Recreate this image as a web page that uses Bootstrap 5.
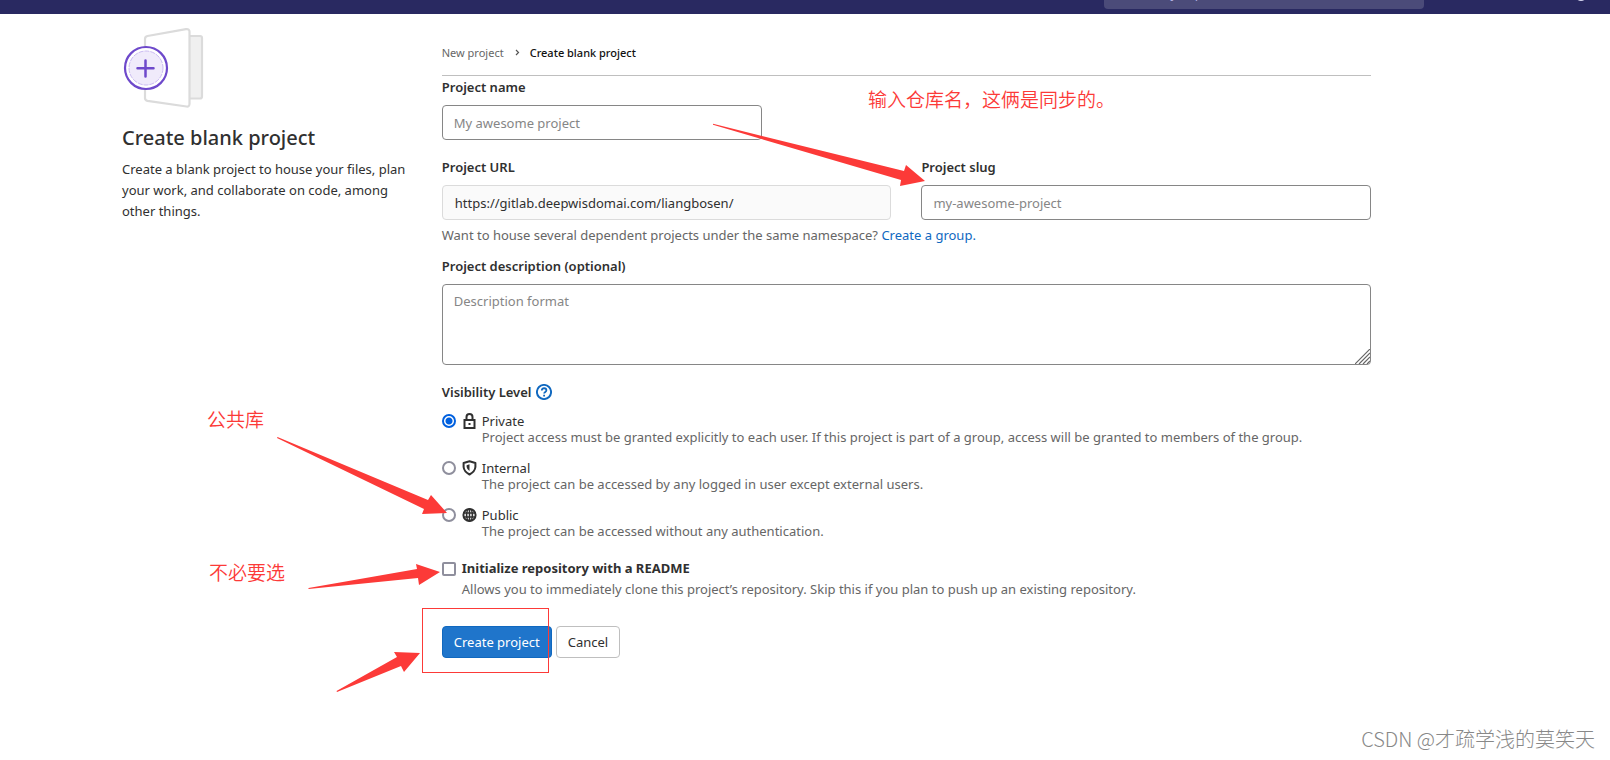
<!DOCTYPE html>
<html lang="en">
<head>
<meta charset="utf-8">
<meta name="viewport" content="width=device-width, initial-scale=1">
<title>Create blank project</title>
<link href="https://cdn.jsdelivr.net/npm/bootstrap@5.3.0/dist/css/bootstrap.min.css" rel="stylesheet">
<style>
body { font-family: "Noto Sans", "Noto Sans CJK SC", sans-serif; font-size: 13px; line-height: 20px; color: #303030; background: #fff; min-height: 100vh; }
.topbar { height: 14px; background: #292961; padding-right: 186px; padding-bottom: 5px; }
.topbar input { width: 320px; height: 32px; border: 0; border-radius: 4px; background: #4b4b79; color: #c0c0e8; padding: 0 6px; font-size: 13px; }
.topbar input::placeholder { color: #b0b0e0; opacity: 1; }
.topbar-icon { right: 23px; bottom: 13px; width: 12px; height: 12px; border-radius: 50%; background: #d8d8f0; }
.page { width: auto; margin-left: 107px; margin-right: 224px; padding: 0 15px; }
.page .row { --bs-gutter-x: 30px; }
.page-title { font-size: 20px; line-height: 26px; font-weight: 500; margin: 17px 0 8px; }
.side-text { line-height: 21px; }
.crumbs { font-size: 11px; line-height: 18px; padding: 30px 0 13px; border-bottom: 1px solid #bfbfbf; margin-bottom: 1px; }
.crumbs a { color: #666; text-decoration: none; }
.crumbs svg { margin: 0 9px; }
.crumbs .current { color: #111; font-weight: 500; }
.block-gap { margin-top: 17px; }
.field-label { display: block; font-size: 13px; font-weight: 600; line-height: 20px; margin: 0 0 8px; }
.field-box { display: block; width: 100%; height: 35px; border: 1px solid #868686; border-radius: 4px; padding: 0 11px; font-size: 13px; background: #fff; color: #303030; }
.field-box::placeholder { color: #868686; opacity: 1; }
.field-box[readonly] { background: #fafafa; border-color: #dbdbdb; padding: 0 12px; }
.name-box { max-width: 320px; }
.help-line { margin: 5px 0 11px; }
textarea.field-box { height: 81px; padding-top: 6px; resize: none; }
.grip { right: 1px; bottom: 1px; }
.muted { color: #666; }
.lnk { color: #1068bf; text-decoration: none; }
.pick { appearance: none; width: 14px; height: 14px; margin: 0; border: 2px solid #8f8f9d; background: #fff; flex: none; }
.pick[type=radio] { border-radius: 50%; }
.pick[type=checkbox] { border-radius: 2px; }
.pick[type=radio]:checked { border-color: #0060df; background: radial-gradient(circle, #0060df 3px, #fff 4px); }
.levels .field-label { margin-bottom: 11px; }
.option { margin-bottom: 15px; line-height: 16px; }
.option svg { margin: 0 5px 0 6px; flex: none; }
.option .muted { padding-left: 40px; }
.readme { gap: 6px; margin-top: 4px; line-height: 21px; }
.actions { margin-top: 26px; }
.btn-form { --bs-btn-padding-x: 11px; --bs-btn-padding-y: 5px; --bs-btn-font-size: 13px; --bs-btn-line-height: 20px; --bs-btn-border-radius: 4px; }
.btn-create { --bs-btn-color: #fff; --bs-btn-bg: #1f75cb; --bs-btn-border-color: #1068bf; --bs-btn-hover-bg: #1068bf; --bs-btn-hover-color: #fff; }
.btn-cancel { --bs-btn-color: #303030; --bs-btn-bg: #fff; --bs-btn-border-color: #bfbfbf; --bs-btn-hover-bg: #f0f0f0; }
.notes { left: 0; top: 0; pointer-events: none; font-family: "Noto Sans CJK SC", sans-serif; font-size: 19px; font-weight: 350; }
.watermark { right: 15px; bottom: 6px; font-family: "Noto Sans CJK SC", sans-serif; font-size: 20px; line-height: 30px; font-weight: 300; color: #888; }
</style>
</head>
<body class="position-relative overflow-x-hidden">
<header class="topbar position-relative overflow-hidden d-flex justify-content-end align-items-end">
  <input type="text" placeholder="Search or jump to…" aria-label="Search or jump to">
  <span class="topbar-icon position-absolute"></span>
</header>

<main class="container-fluid page">
  <div class="row">
    <aside class="col-3">
      <svg class="d-block mt-3" width="84" height="78" viewBox="-1 0 84 78" fill="none" aria-hidden="true" overflow="visible">
        <rect x="60" y="6" width="19" height="62.500" rx="2" fill="#f0f0f0" stroke="#dbdbdb" stroke-width="2.200"/>
        <path d="M22 9Q22 6.500 24.500 6L63-.8Q66.500-1.200 66.500 1.500V74Q66.200 77 63.500 76.500L24.500 70.800Q22 70.300 22 68z" fill="#fff" stroke="#dbdbdb" stroke-width="2.200"/>
        <circle cx="23" cy="38" r="21" fill="#fff" stroke="#6e49cb" stroke-width="2.200"/>
        <circle cx="23" cy="38" r="17" fill="#f0ebfb" stroke="#cbbbf2" stroke-width="1" stroke-dasharray="5 1"/>
        <path d="M14.500 38.300h16M22.500 30.500v16" stroke="#6e49cb" stroke-width="2.500" stroke-linecap="round"/>
      </svg>
      <h1 class="page-title">Create blank project</h1>
      <p class="side-text mb-0">Create a blank project to house your files, plan your work, and collaborate on code, among other things.</p>
    </aside>

    <div class="col-9">
      <nav class="crumbs d-flex align-items-center" aria-label="Breadcrumb">
        <a href="#">New project</a>
        <svg width="8" height="8" viewBox="0 0 8 8" fill="none" stroke="#555" stroke-width="1.200" aria-hidden="true"><path d="m3 1 2.500 2.500L3 6"/></svg>
        <span class="current">Create blank project</span>
      </nav>

      <form onsubmit="return false">
        <label class="field-label" for="pname">Project name</label>
        <input class="field-box name-box" id="pname" type="text" placeholder="My awesome project">
        <div class="row block-gap">
          <div class="col-6">
            <label class="field-label" for="purl">Project URL</label>
            <input class="field-box" id="purl" type="text" readonly value="https://gitlab.deepwisdomai.com/liangbosen/">
          </div>
          <div class="col-6">
            <label class="field-label" for="pslug">Project slug</label>
            <input class="field-box" id="pslug" type="text" placeholder="my-awesome-project">
          </div>
        </div>
        <p class="muted help-line">Want to house several dependent projects under the same namespace? <a class="lnk" href="#">Create a group.</a></p>
        <label class="field-label" for="pdesc">Project description (optional)</label>
        <div class="position-relative">
          <textarea class="field-box" id="pdesc" placeholder="Description format"></textarea>
          <svg class="grip position-absolute" width="15" height="15" viewBox="0 0 15 15" stroke="#666" stroke-width="1.200" aria-hidden="true"><path d="M0 15 15 0M4 15 15 4M8 15 15 8M12 15 15 12"/></svg>
        </div>

        <fieldset class="levels block-gap">
          <legend class="field-label d-flex align-items-center">Visibility Level
            <a class="d-flex ms-1" href="#" aria-label="Help"><svg width="16" height="16" viewBox="0 0 16 16" fill="none" stroke="#1068bf" aria-hidden="true"><circle cx="8" cy="8" r="7.100" stroke-width="1.900"/><path d="M5.800 6.400C5.800 3.400 10.400 3.700 10.400 6.300 10.400 7.900 8.100 7.900 8.100 9.600" stroke-width="1.800"/><path d="M7.200 11.700H9" stroke-width="1.800"/></svg></a>
          </legend>
          <div class="option">
            <div class="d-flex align-items-center">
              <input class="pick" type="radio" name="vis" id="v1" checked>
              <svg width="15" height="16" viewBox="0 0 15 16" fill="none" stroke="#303030" stroke-width="2" aria-hidden="true"><path d="M2.500 7h10v8h-10zM4.500 7V4Q4.500 1 7.500 1T10.500 4V7"/><path d="M6.500 11h2"/></svg>
              <label for="v1">Private</label>
            </div>
            <div class="muted">Project access must be granted explicitly to each user. If this project is part of a group, access will be granted to members of the group.</div>
          </div>
          <div class="option">
            <div class="d-flex align-items-center">
              <input class="pick" type="radio" name="vis" id="v2">
              <svg width="15" height="16" viewBox="0 0 15 16" fill="none" aria-hidden="true"><path d="M7.500 1.300 13.400 3V7Q13 11.500 7.500 14.500 2 11.500 1.600 7V3z" stroke="#303030" stroke-width="2" stroke-linejoin="round"/><path d="M7.500 4.300V11Q4.800 9 4.600 7V5.200z" fill="#303030"/></svg>
              <label for="v2">Internal</label>
            </div>
            <div class="muted">The project can be accessed by any logged in user except external users.</div>
          </div>
          <div class="option">
            <div class="d-flex align-items-center">
              <input class="pick" type="radio" name="vis" id="v3">
              <svg width="15" height="16" viewBox="0 0 15 16" fill="none" stroke="#303030" aria-hidden="true"><circle cx="7.500" cy="8" r="6.100" stroke-width="2"/><ellipse cx="7.500" cy="8" rx="2.900" ry="6" stroke-width="1.600"/><path d="M1.500 6h12M1.500 10h12M7.500 2v12" stroke-width="1.500"/></svg>
              <label for="v3">Public</label>
            </div>
            <div class="muted">The project can be accessed without any authentication.</div>
          </div>
        </fieldset>

        <div class="readme d-flex">
          <input class="pick mt-1" type="checkbox" id="readme">
          <div>
            <label class="fw-bold d-block" for="readme">Initialize repository with a README</label>
            <div class="muted">Allows you to immediately clone this project’s repository. Skip this if you plan to push up an existing repository.</div>
          </div>
        </div>

        <div class="actions d-flex gap-1">
          <button class="btn btn-form btn-create" type="submit">Create project</button>
          <button class="btn btn-form btn-cancel" type="button">Cancel</button>
        </div>
      </form>
    </div>
  </div>
</main>

<!-- Hand-drawn notes lying over the form -->
<svg class="notes position-absolute" width="1200" height="720" viewBox="0 0 1200 720" fill="#fc3a38">
  <path d="M713 123.800 904 171 906 165 925 181 900 186 901 180 713 124.800z"/>
  <path d="M277.500 437 428 500 431 495 447 513 422 514 424 509 277 438z"/>
  <path d="M308.500 588 417 569 416 564 440 572 419 585 418 578 308.500 589z"/>
  <path d="M336.500 691 397 657 394 652 420 653 404 672 401 666 337 692z"/>
  <rect x="422.500" y="608.500" width="126" height="64" fill="none" stroke="#fc3a38"/>
  <text x="868" y="107">输入仓库名，这俩是同步的。</text>
  <text x="207" y="427">公共库</text>
  <text x="209" y="580">不必要选</text>
</svg>
<div class="watermark position-absolute">CSDN @才疏学浅的莫笑天</div>
<script src="https://cdn.jsdelivr.net/npm/bootstrap@5.3.0/dist/js/bootstrap.bundle.min.js"></script>
</body>
</html>
